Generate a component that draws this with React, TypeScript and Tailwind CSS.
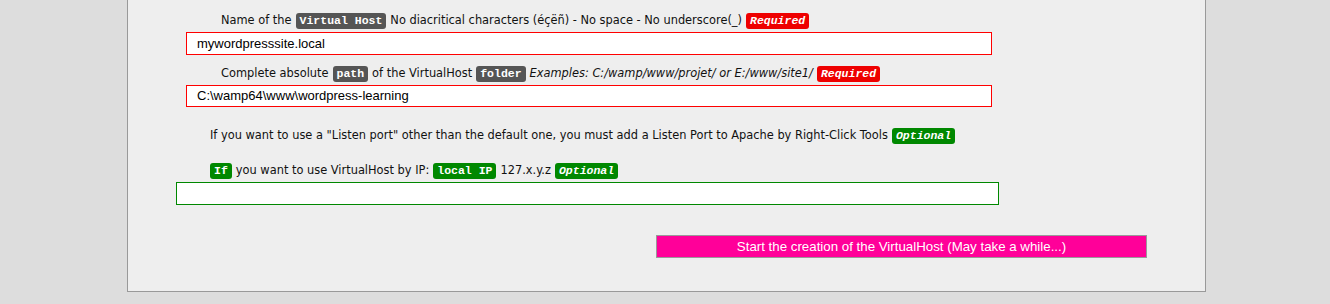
import React from 'react'

const label = "font-['DejaVu_Sans',Verdana,sans-serif] text-[11.4px] text-[#111]"

function Tag({ children, color, italic }: { children: React.ReactNode; color: 'dark' | 'red' | 'green'; italic?: boolean }) {
  const bg = color === 'dark' ? 'bg-[#555]' : color === 'red' ? 'bg-[#e00]' : 'bg-[#080]'
  return (
    <span
      className={`${bg} ${italic ? 'italic' : 'not-italic'} inline-flex h-[16px] items-center rounded-[3px] px-[4px] font-['Liberation_Mono',monospace] text-[11.5px] font-bold text-white`}
    >
      {children}
    </span>
  )
}

export default function App() {
  return (
    <div className="min-h-[304px] w-full bg-[#ddd]">
      <div className="ml-[127px] w-[1079px] border-x border-b border-[#999] bg-[#eee] pt-[12px] pb-[33px]">
        <div className={`${label} flex h-[17px] items-center gap-[4px] pl-[93px]`}>
          <span>Name of the</span>
          <Tag color="dark">Virtual Host</Tag>
          <span>No diacritical characters (éçëñ) - No space - No underscore(_)</span>
          <Tag color="red" italic>Required</Tag>
        </div>
        <div className="ml-[58px] mt-[3px] flex h-[23px] w-[806px] items-center border border-[#f00] bg-white pl-[10px] font-['Liberation_Sans',Arial,sans-serif] text-[13px] text-black">
          mywordpresssite.local
        </div>

        <div className={`${label} mt-[11px] flex h-[16px] items-center gap-[4px] pl-[93px]`}>
          <span>Complete absolute</span>
          <Tag color="dark">path</Tag>
          <span>of the VirtualHost</span>
          <Tag color="dark">folder</Tag>
          <i>Examples: C:/wamp/www/projet/ or E:/www/site1/</i>
          <Tag color="red" italic>Required</Tag>
        </div>
        <div className="ml-[58px] mt-[3px] flex h-[22px] w-[806px] items-center border border-[#f00] bg-white pl-[10px] font-['Liberation_Sans',Arial,sans-serif] text-[13px] text-black">
          C:\wamp64\www\wordpress-learning
        </div>

        <div className={`${label} mt-[21px] flex h-[16px] items-center gap-[4px] pl-[82px]`}>
          <span>
            If you want to use a "Listen port" other than the default one, you must add a Listen Port to Apache by
            Right-Click Tools
          </span>
          <Tag color="green" italic>Optional</Tag>
        </div>

        <div className={`${label} mt-[19px] flex h-[16px] items-center gap-[4px] pl-[82px]`}>
          <Tag color="green">If</Tag>
          <span>you want to use VirtualHost by IP:</span>
          <Tag color="green">local IP</Tag>
          <span>127.x.y.z</span>
          <Tag color="green" italic>Optional</Tag>
        </div>
        <div className="ml-[48px] mt-[3px] h-[23px] w-[823px] border border-[#080] bg-white" />

        <div className="ml-[528px] mt-[30px] flex h-[23px] w-[491px] items-center justify-center border border-[#999] bg-[#ff0099] font-['Liberation_Sans',Arial,sans-serif] text-[13.3px] text-white">
          Start the creation of the VirtualHost (May take a while...)
        </div>
      </div>
    </div>
  )
}
